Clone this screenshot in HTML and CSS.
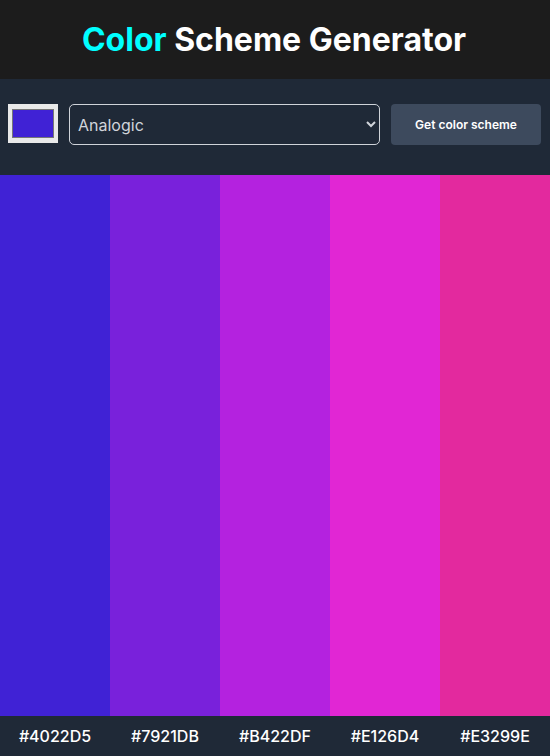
FILE: index.html
```html
<!DOCTYPE html>
<html lang="en">
<head>
<meta charset="utf-8">
<title>Color Scheme Generator</title>
<link rel="stylesheet" href="styles.css">
</head>
<body>
<header class="header">
  <h1 class="title"><span class="accent">Color</span> Scheme Generator</h1>
</header>
<form class="controls">
  <input class="picker" type="color" value="#4022d5">
  <select class="mode">
    <option>Analogic</option>
    <option>Monochrome</option>
    <option>Complement</option>
  </select>
  <button class="btn" type="button">Get color scheme</button>
</form>
<main class="scheme">
  <div class="swatch" style="background:#4022D5"></div>
  <div class="swatch" style="background:#7921DB"></div>
  <div class="swatch" style="background:#B422DF"></div>
  <div class="swatch" style="background:#E126D4"></div>
  <div class="swatch" style="background:#E3299E"></div>
</main>
<footer class="codes">
  <span class="code">#4022D5</span>
  <span class="code">#7921DB</span>
  <span class="code">#B422DF</span>
  <span class="code">#E126D4</span>
  <span class="code">#E3299E</span>
</footer>
</body>
</html>
```

FILE: styles.css
```css
* { box-sizing: border-box; }
html, body { margin: 0; height: 100%; }
body {
  font-family: Inter, "Noto Sans", sans-serif;
  background: #1f2937;
  color: #fff;
  display: flex;
  flex-direction: column;
}
.header {
  background: #1c1c1c;
  height: 79px;
  display: flex;
  align-items: center;
  justify-content: center;
  padding-right: 2px;
}
.title {
  margin: 0;
  font-size: 32px;
  font-weight: 700;
  color: #fff;
}
.accent { color: #00ffff; }
.controls {
  margin: 0;
  height: 96px;
  background: #1f2937;
  display: flex;
  align-items: flex-start;
  gap: 11px;
  padding: 25px 9px 0 8px;
}
.picker {
  -webkit-appearance: none;
  appearance: none;
  width: 50px;
  height: 39px;
  border: none;
  padding: 5px 4px;
  background: #e9e9e9;
  margin: 0;
  flex: none;
  cursor: pointer;
}
.picker::-webkit-color-swatch-wrapper { padding: 0; }
.picker::-webkit-color-swatch { border: 1px solid #777; border-radius: 0; }
.mode {
  flex: 1;
  height: 41px;
  background: #1f2937;
  color: #d1d5db;
  border: 1px solid #cfd3d9;
  border-radius: 5px;
  font-family: Inter, "Noto Sans", sans-serif;
  font-size: 16px;
  padding: 0 4px;
  margin: 0;
}
.btn {
  flex: none;
  width: 150px;
  height: 41px;
  background: #3d4a5d;
  color: #fff;
  border: none;
  border-radius: 4px;
  font-family: Inter, "Noto Sans", sans-serif;
  font-size: 12px;
  font-weight: 600;
  margin: 0;
}
.scheme {
  flex: 1;
  display: flex;
}
.swatch { flex: 1; }
.codes {
  height: 40px;
  display: flex;
  align-items: center;
  background: #1f2937;
}
.code {
  flex: 1;
  text-align: center;
  font-size: 16px;
  font-weight: 500;
  color: #fff;
}
```
